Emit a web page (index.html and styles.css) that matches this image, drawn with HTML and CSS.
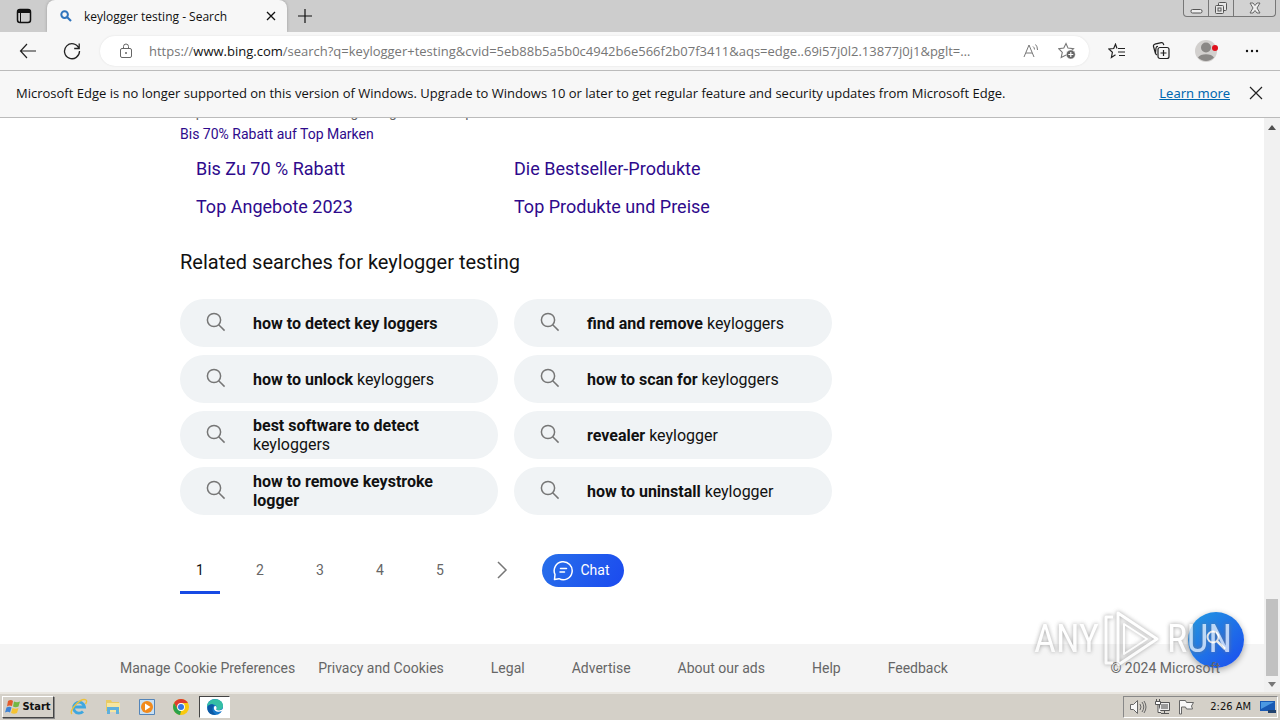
FILE: index.html
```html
<!DOCTYPE html>
<html lang="en">
<head>
<meta charset="utf-8">
<title>keylogger testing - Search</title>
<link rel="stylesheet" href="styles.css">
</head>
<body>
<svg class="defs" aria-hidden="true">
  <symbol id="lens" viewBox="0 0 20 20"><circle cx="8" cy="8" r="6.6"/><path d="M12.7 12.7 18.6 18.6"/></symbol>
</svg>
<header class="tabbar">
  <button class="tab-actions" aria-label="Tab actions"><svg width="16" height="16" viewBox="0 0 16 16"><rect x="1.5" y="1.5" width="13" height="13" rx="2.5" fill="none" stroke="#111" stroke-width="1.5"/><path d="M1.5 5V3.5a2 2 0 0 1 2-2h9a2 2 0 0 1 2 2V5z" fill="#111"/><path d="M4.5 5v9" stroke="#111"/></svg></button>
  <div class="tab">
    <svg width="12" height="12" viewBox="0 0 12 12" fill="none" stroke="#2f74bd" stroke-width="2"><circle cx="4.6" cy="4.6" r="3.3"/><path d="m7 7 4 4" stroke-width="2.2"/></svg>
    <span class="tab-title">keylogger testing - Search</span>
    <button aria-label="Close tab"><svg width="10" height="10" viewBox="0 0 10 10" stroke="#111" stroke-width="1.3"><path d="m1 1 8 8M9 1 1 9"/></svg></button>
  </div>
  <button class="new-tab" aria-label="New tab"><svg width="14" height="14" viewBox="0 0 14 14" stroke="#111" stroke-width="1.2"><path d="M7 0v14M0 7h14"/></svg></button>
  <div class="window-buttons">
    <button aria-label="Minimize"><svg width="13" height="14" viewBox="0 0 13 14" fill="#eee" stroke="#555"><rect x="1" y="8.5" width="11" height="3.5" rx="1.5"/></svg></button>
    <button aria-label="Restore"><svg width="14" height="14" viewBox="0 0 14 14" fill="#e6e6e6" stroke="#555"><rect x="4.5" y="1.5" width="8" height="8" rx="1"/><rect x="1.500" y="4.500" width="8" height="8" rx="1"/><rect x="4" y="7" width="3" height="3"/></svg></button>
    <button aria-label="Close"><svg width="12" height="12" viewBox="0 0 12 12" fill="#eee" stroke="#666"><path d="M1 1h3l2 2.500L8 1h3L8 6l3 5H8L6 8.500 4 11H1l3-5z"/></svg></button>
  </div>
</header>
<nav class="toolbar">
  <button aria-label="Back"><svg width="18" height="16" viewBox="0 0 18 16" fill="none" stroke="#222" stroke-width="1.200"><path d="M8 1 1.500 8 8 15M1.500 8H17"/></svg></button>
  <button aria-label="Refresh"><svg width="18" height="18" viewBox="0 0 18 18" fill="none" stroke="#222" stroke-width="1.300"><path d="M16 6.500A7.500 7.500 0 1 0 16.500 9M16.200 1.500v5h-5"/></svg></button>
  <div class="address">
    <svg width="14" height="16" viewBox="0 0 14 16" fill="none" stroke="#666"><rect x="1.500" y="5.500" width="11" height="9" rx="1.500"/><path d="M4.500 5.500V3.500a2.500 2.500 0 0 1 5 0v2"/><circle cx="7" cy="10" r="1" fill="#666" stroke="none"/></svg>
    <div class="url">https://<b>www.bing.com</b>/search?q=keylogger+testing&amp;cvid=5eb88b5a5b0c4942b6e566f2b07f3411&amp;aqs=edge..69i57j0l2.13877j0j1&amp;pglt=…</div>
    <button aria-label="Read aloud"><svg width="18" height="16" viewBox="0 0 18 16" fill="none" stroke="#777"><path d="m2 14 5-12 5 12M4 10h6M11 3.500q1.500 1 1.500 3M13.500 1.500q2 1.800 2 5.500"/></svg></button>
    <button aria-label="Add to favorites"><svg width="18" height="18" viewBox="0 0 18 18" fill="none" stroke="#777" stroke-width="1.100"><path d="m8 1.500 2 4.600 5.500.6-3.800 3.600 1 5L8 13l-4.800 2.500 1.100-5.200L.8 6.700l5-.6z"/><circle cx="12.800" cy="12.500" r="4.500" fill="#666" stroke="#fff" stroke-width=".5"/><path d="M12.800 10v5m-2.500-2.500h5" stroke="#fff"/></svg></button>
  </div>
  <div class="tools">
    <button aria-label="Favorites"><svg width="18" height="16" viewBox="0 0 18 16" fill="none" stroke="#222" stroke-width="1.200"><path d="M9 5.500 7.500 1.200 5.700 5.500.8 6l3.600 3.300-1 5.200 4.100-2.700M10 5.500h7M10 9h7M11 12.500h6"/></svg></button>
    <button aria-label="Collections"><svg width="18" height="18" viewBox="0 0 18 18" fill="none" stroke="#222" stroke-width="1.200"><path d="M3.500 11.500 1.500 4.500a2 2 0 0 1 1.300-2.300l6.500-1.500a2 2 0 0 1 2.200 1.400l.3 1M5 13a2 2 0 0 1-1.500-2l.5-5a2 2 0 0 1 2-1.700"/><rect x="6" y="5.500" width="11" height="11" rx="2"/><path d="M11.500 8v6m-3-3h6"/></svg></button>
    <button aria-label="Profile"><svg width="24" height="24" viewBox="0 0 24 24"><circle cx="12" cy="12" r="11" fill="#d2d0ce"/><circle cx="12" cy="8.500" r="5" fill="#8a8886"/><path d="M4 18.500c2-4.500 14-4.500 16 0a11 11 0 0 1-16 0" fill="#8a8886"/><circle cx="21" cy="9" r="3" fill="#e0101c"/></svg></button>
    <button aria-label="More"><svg width="14" height="4" viewBox="0 0 14 4" fill="#111"><circle cx="2" cy="2" r="1.200"/><circle cx="7" cy="2" r="1.200"/><circle cx="12" cy="2" r="1.200"/></svg></button>
  </div>
</nav>
<div class="notice">
  <p>Microsoft Edge is no longer supported on this version of Windows. Upgrade to Windows 10 or later to get regular feature and security updates from Microsoft Edge.</p>
  <a href="#">Learn more</a>
  <button aria-label="Dismiss"><svg width="14" height="14" viewBox="0 0 14 14" stroke="#222" stroke-width="1.200"><path d="m1 1 12 12M13 1 1 13"/></svg></button>
</div>
<div class="view">
  <div class="page">
    <main>
      <p class="snippet">Top Marken mit bis zu 70% günstig kaufen. Top</p>
      <a class="sub" href="#">Bis 70% Rabatt auf Top Marken</a>
      <div class="sitelinks"><a href="#">Bis Zu 70 % Rabatt</a><a href="#">Die Bestseller-Produkte</a><a href="#">Top Angebote 2023</a><a href="#">Top Produkte und Preise</a></div>
      <h2>Related searches for keylogger testing</h2>
      <div class="related">
        <a href="#"><svg><use href="#lens"/></svg><span><b>how to detect key loggers</b></span></a>
        <a href="#"><svg><use href="#lens"/></svg><span><b>find and remove</b> keyloggers</span></a>
        <a href="#"><svg><use href="#lens"/></svg><span><b>how to unlock</b> keyloggers</span></a>
        <a href="#"><svg><use href="#lens"/></svg><span><b>how to scan for</b> keyloggers</span></a>
        <a href="#"><svg><use href="#lens"/></svg><span><b>best software to detect</b> keyloggers</span></a>
        <a href="#"><svg><use href="#lens"/></svg><span><b>revealer</b> keylogger</span></a>
        <a href="#"><svg><use href="#lens"/></svg><span><b>how to remove keystroke logger</b></span></a>
        <a href="#"><svg><use href="#lens"/></svg><span><b>how to uninstall</b> keylogger</span></a>
      </div>
      <nav class="pager" aria-label="Pages">
        <a class="current" href="#">1</a><a href="#">2</a><a href="#">3</a><a href="#">4</a><a href="#">5</a>
        <a href="#" aria-label="Next page"><svg width="12" height="18" viewBox="0 0 12 18" fill="none" stroke="#767676" stroke-width="1.500"><path d="m2 1 8 8-8 8"/></svg></a>
        <button class="chat"><svg width="21" height="21" viewBox="0 0 21 21" fill="none" stroke="#fff" stroke-width="1.500" stroke-linecap="round" stroke-linejoin="round"><path d="M1.500 19.500 2 14.500a9 9 0 1 1 4 4.200z"/><path d="M7.500 8.500h6M7 12h4.500"/></svg>Chat</button>
      </nav>
    </main>
    <footer>
      <a href="#">Manage Cookie Preferences</a><a href="#">Privacy and Cookies</a><a href="#">Legal</a><a href="#">Advertise</a><a href="#">About our ads</a><a href="#">Help</a><a href="#">Feedback</a>
      <span>© 2024 Microsoft</span>
    </footer>
    <button class="fab" aria-label="Search"><svg width="22" height="22" viewBox="0 0 22 22" fill="none" stroke="#fff"><circle cx="8" cy="8" r="5.500" stroke-width="2"/><path d="m12 12 8 8" stroke-width="2.500"/></svg></button>
    <div class="watermark"><span>ANY</span><svg width="60" height="62" viewBox="0 0 60 62" fill="none" stroke="#fff" stroke-width="3" stroke-linejoin="round"><path d="M10 9H3v46h7M15 5v52l39-26z"/><path d="M21 16v30l23-15z" stroke-width="2"/></svg><span>RUN</span></div>
  </div>
  <div class="scrollbar" aria-hidden="true"><i class="up"></i><i class="thumb"></i><i class="down"></i></div>
</div>
<div class="taskbar">
  <button class="start"><svg width="16" height="16" viewBox="0 0 16 16"><path d="M3 2q3-2 5 0L7 7q-3-1-5 .5z" fill="#e25b2b"/><path d="M9 2.500q3 1.500 6 0L13.500 7.500q-3 1.500-5.500 0z" fill="#73b743"/><path d="M1.500 8.500q3-1.500 5 0l-1.500 5q-2-1.500-5 0z" fill="#3d83d6"/><path d="M7.500 9q3 1.500 6 0L12 14q-3 1.500-6 0z" fill="#f5c332"/></svg>Start</button>
  <div class="launchers">
    <button aria-label="Internet Explorer"><svg width="18" height="18" viewBox="0 0 18 18" fill="none"><path d="M4 9h10.500A5.500 5.500 0 1 0 13 13.500" stroke="#3fa7df" stroke-width="2.800"/><path d="M2 16C-2 13 11-1 16 2c1 .8.500 2.500-.5 4" stroke="#edc23c" stroke-width="1.400"/></svg></button>
    <button aria-label="Explorer"><svg width="18" height="18" viewBox="0 0 18 18"><path d="M2 2h5l1 2h7v9H2z" fill="#e9cb64"/><path d="M3 5h13v9H3z" fill="#f6e6a0"/><path d="M3 9h12v7h-3v-4H6v4H3z" fill="#5fb0dc"/></svg></button>
    <button aria-label="Media Player"><svg width="16" height="16" viewBox="0 0 16 16"><path d="M.5.5h15v15H.5z" fill="#c8e0f4" stroke="#5485b9"/><circle cx="8" cy="8" r="6" fill="#f18a1c"/><path d="m6 4.500 5.500 3.500L6 11.500z" fill="#fff"/></svg></button>
    <button aria-label="Chrome"><svg width="16" height="16" viewBox="0 0 16 16"><circle cx="8" cy="8" r="8" fill="#f9c90e"/><path d="M1.100 4A8 8 0 0 1 14.900 4H8L4.500 10z" fill="#de3b30"/><path d="M1.100 4 4.500 10 8 12l-1 3.900A8 8 0 0 1 1.100 4" fill="#2aa24c"/><circle cx="8" cy="8" r="3.900" fill="#fff"/><circle cx="8" cy="8" r="3" fill="#3477e5"/></svg></button>
    <button class="active" aria-label="Edge"><svg width="18" height="18" viewBox="0 0 18 18"><circle cx="9" cy="9" r="8" fill="#1577c9"/><path d="M1 9C1-1 17-1 17 8c0 4-5 5-7 3.500 2-2 0-5-3-5S2 7 1 9" fill="#35bfa5"/><path d="M8 9c-1 4 4 6 8 4l1.500-1-1-1c-2 2-5 1.500-6.500.5 1.300-1.500.5-3-.5-3.500-.8 0-1.300.5-1.500 1" fill="#fff"/><path d="M2 8c3-3 6-1.500 6-.5-3 3-1 8 2 9C4 18 0 13 2 8" fill="#0c59a4"/></svg></button>
  </div>
  <div class="tray">
    <svg width="18" height="16" viewBox="0 0 18 16" fill="#f8f8f8" stroke="#666"><path d="M1.500 5.500h3l4-4v13l-4-4h-3z"/><path d="M11 5q2 3 0 6M13 3q3.500 5 0 10M15 2q4 6 0 12" fill="none"/></svg>
    <svg width="17" height="16" viewBox="0 0 17 16" fill="#eee" stroke="#555"><path d="M5.500 3.500h10v8h-10zM7 14.500h8M10.500 12v2"/><path d="M7 5h7v5H7z" fill="#999" stroke="none"/><path d="M2.500 0v3M5.500 0v3M1.500 2.500h5v3h-5zM4 5.500v8h3" fill="#fff"/></svg>
    <svg width="17" height="16" viewBox="0 0 17 16" fill="#f8f8f8" stroke="#666"><path d="M1.500 15V1.500h6l1 2h7l-2 3.500 1 3h-6l-1-2h-4V15z"/></svg>
    <time>2:26 AM</time>
    <svg width="16" height="14" viewBox="0 0 16 14"><path d="M0 1h15v10H0z" fill="#1859b4"/><path d="M1 2h13L1 9z" fill="#4b98e2"/><path d="M8 10h8v3H8z" fill="#22436f"/></svg>
  </div>
</div>
</body>
</html>
```
FILE: styles.css
```css
* { box-sizing: border-box; }
body { margin: 0; height: 100vh; display: flex; flex-direction: column; overflow: hidden; background: #fff; color: #111; font: 13px "Noto Sans", "Open Sans", sans-serif; }
button { border: 0; padding: 0; background: none; font: inherit; color: inherit; display: flex; align-items: center; justify-content: center; }
p, h2 { margin: 0; }
a { text-decoration: none; }
svg { flex: none; }
.defs { position: absolute; width: 0; height: 0; }

.tabbar { display: flex; flex: none; height: 32px; background: #cdcdcd; }
.tab-actions { width: 47px; border-radius: 0 0 8px 0; }
.tab { display: flex; align-items: center; width: 240px; padding: 0 11px 0 13px; background: #f7f7f7; border-radius: 8px 8px 0 0; box-shadow: 0 0 3px #999; font-size: 12px; }
.tab-title { flex: 1; margin-left: 12px; font-family: "Open Sans", sans-serif; }
.new-tab { width: 35px; }
.window-buttons { display: flex; height: 17px; margin: 0 4px 0 auto; border: 1px solid #777; border-top: 0; border-radius: 0 0 4px 4px; background: #d2d2d2; }
.window-buttons button { width: 25px; border-right: 1px solid #777; }
.window-buttons button:last-child { width: 41px; border: 0; }

.toolbar { position: relative; display: flex; flex: none; align-items: center; height: 39px; padding: 0 5px 0 6px; background: #f7f7f7; border-bottom: 1px solid #bbb; }
.toolbar > button { width: 44px; height: 32px; }
.address { display: flex; flex: 1; min-width: 0; align-items: center; height: 30px; margin-left: 6px; padding: 0 13px 0 19px; border-radius: 15px; background: #fff; box-shadow: 0 0 2px #ddd; }
.address button { width: 36px; }
.address button:last-child { width: 18px; margin-left: 9px; }
.url { flex: 1; min-width: 0; margin-left: 16px; overflow: hidden; white-space: nowrap; color: #767676; font: 13px "Open Sans", sans-serif; }
.url b { color: #111; font-weight: 400; }
.tools { display: flex; margin-left: 6px; }
.tools button { width: 44px; height: 32px; }
.tools button:nth-child(3), .tools button:nth-child(4) { width: 46px; }

.notice { display: flex; flex: none; align-items: center; height: 47px; padding: 0 14px 2px 16px; background: #f7f7f7; border-bottom: 1px solid #bbb; }
.notice p { flex: 1; white-space: nowrap; font-family: "Open Sans", sans-serif; }
.notice a { color: #0067b0; text-decoration: underline; }
.notice button { width: 20px; margin-left: 16px; }

.view { display: flex; flex: 1; min-height: 0; overflow: hidden; font-family: Roboto, sans-serif; }
.page { position: relative; display: flex; flex: 1; flex-direction: column; min-width: 0; }
main { width: 652px; margin: -17px 0 0 180px; }
.snippet, .sub { display: block; font-size: 14px; line-height: 22px; }
.snippet { color: #666; }
.sub, .sitelinks a { color: #2e0a8c; }
.sitelinks { display: grid; grid-template-columns: 318px 1fr; margin: 5px 0 24px; padding-left: 16px; font-size: 18px; line-height: 38px; }
h2 { margin-bottom: 25px; color: #111; font-size: 20px; font-weight: 400; line-height: 24px; }
.related { display: grid; grid-template-columns: 1fr 1fr; gap: 8px 16px; }
.related a { display: flex; align-items: center; height: 48px; padding: 0 44px 0 26px; border-radius: 24px; background: #f0f3f5; color: #111; font-size: 16px; line-height: 19px; }
.related svg { width: 20px; height: 20px; margin: 0 27px 2px 0; fill: none; stroke: #767676; stroke-width: 1.5; }
.pager { display: flex; align-items: center; gap: 20px; margin-top: 31px; }
.pager a { display: flex; align-items: center; justify-content: center; width: 40px; height: 48px; border-bottom: 3px solid transparent; border-top: 3px solid transparent; color: #666; font-size: 14px; }
.pager a:nth-child(6) { margin-left: 2px; }
.pager .current { border-bottom-color: #174ae4; color: #111; }
.chat { gap: 6px; width: 82px; height: 33px; padding-right: 3px; border-radius: 17px; background: linear-gradient(120deg, #2870ea, #1b4aef); color: #fff; font-size: 14px; }
footer { position: relative; z-index: 2; display: flex; align-items: center; gap: 47px; height: 48px; margin-top: auto; padding: 0 44px 0 120px; color: #666; font-size: 14px; }
.page::after { content: ""; position: absolute; inset: auto 0 0; height: 48px; background: #f4f4f4; }
footer a { color: #666; white-space: nowrap; }
footer a:first-child { margin-right: -24px; }
footer span { margin-left: auto; white-space: nowrap; }
.fab { position: absolute; right: 20px; bottom: 24px; z-index: 1; width: 56px; height: 56px; border-radius: 50%; background: linear-gradient(135deg, #239be0, #1b4aef); box-shadow: 0 2px 6px #0005; }
.watermark { position: absolute; right: 32px; bottom: 22px; z-index: 3; display: flex; align-items: center; gap: 4px; opacity: .7; color: #fff; font: 38px "Liberation Sans Narrow", "Roboto Condensed", Roboto, sans-serif; filter: drop-shadow(0 0 2px #777); pointer-events: none; }
.scrollbar { display: flex; flex: none; flex-direction: column; align-items: center; width: 16px; padding: 7px 0 5px; background: #f1f1f1; }
.scrollbar .up { border: 4px solid transparent; border-top: 0; border-bottom: 5px solid #505050; }
.scrollbar .down { border: 4px solid transparent; border-bottom: 0; border-top: 5px solid #777; }
.scrollbar .thumb { width: 12px; height: 77px; margin: auto 0 6px; background: #c1c1c1; }

.taskbar { display: flex; flex: none; align-items: center; height: 28px; padding: 0 2px 1px; border-top: 2px solid #e9e6e0; background: #d4d0c8; }
.start { gap: 1px; width: 52px; height: 22px; border: 1px solid; border-color: #fff #444 #444 #fff; box-shadow: 1px 1px #888; font: bold 11px "DejaVu Sans Condensed", "DejaVu Sans", sans-serif; }
.launchers { display: flex; margin-left: 8px; }
.launchers button { width: 34px; height: 22px; }
.launchers .active { width: 31px; margin-left: 1px; border: 1px solid; border-color: #444 #fff #fff #444; background: #fff; }
.tray { display: flex; align-items: center; gap: 7px; height: 22px; margin-left: auto; padding: 0 1px 0 5px; border: 1px solid; border-color: #888 #fff #fff #888; }
.tray time { margin: 0 2px 0 8px; font: 11px "DejaVu Sans Condensed", "DejaVu Sans", sans-serif; }
```
